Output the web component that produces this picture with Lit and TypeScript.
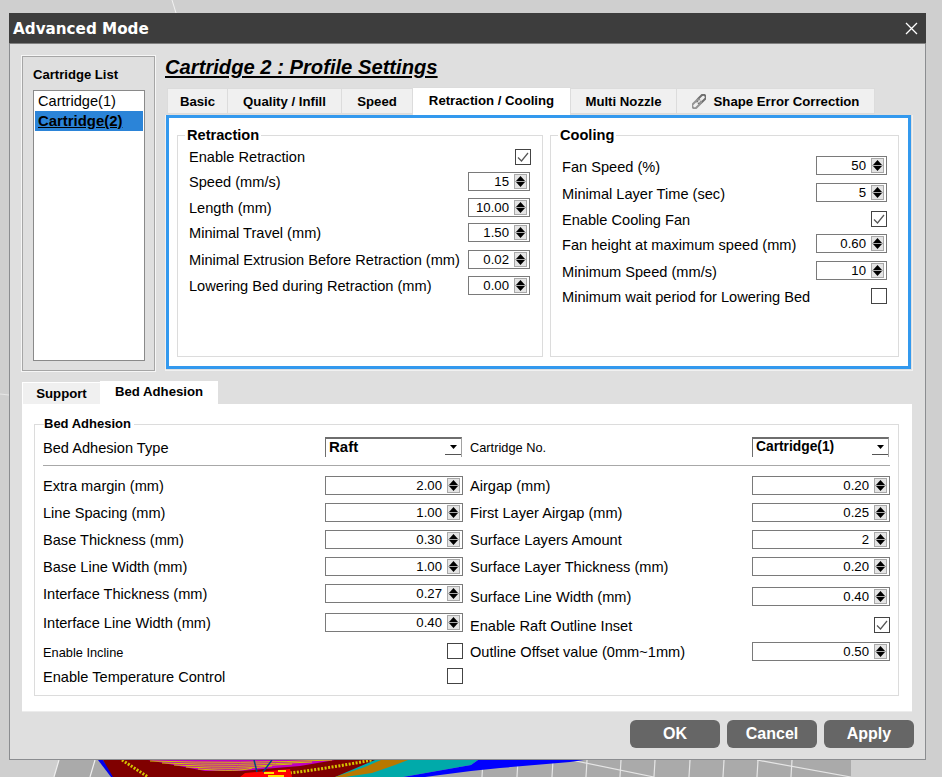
import { LitElement, css, html, svg } from 'lit';
import { customElement } from 'lit/decorators.js';

type Row = { label: string; y: number; value?: string; check?: boolean; small?: boolean };

const retraction: Row[] = [
  { label: 'Enable Retraction', y: 157, check: true },
  { label: 'Speed (mm/s)', y: 182, value: '15' },
  { label: 'Length (mm)', y: 208, value: '10.00' },
  { label: 'Minimal Travel (mm)', y: 233, value: '1.50' },
  { label: 'Minimal Extrusion Before Retraction (mm)', y: 260, value: '0.02' },
  { label: 'Lowering Bed during Retraction (mm)', y: 286, value: '0.00' },
];

const cooling: Row[] = [
  { label: 'Fan Speed (%)', y: 166, value: '50' },
  { label: 'Minimal Layer Time (sec)', y: 193, value: '5' },
  { label: 'Enable Cooling Fan', y: 219, check: true },
  { label: 'Fan height at maximum speed (mm)', y: 244, value: '0.60' },
  { label: 'Minimum Speed (mm/s)', y: 271, value: '10' },
  { label: 'Minimum wait period for Lowering Bed', y: 296, check: false },
];

const bedLeft: Row[] = [
  { label: 'Extra margin (mm)', y: 485, value: '2.00' },
  { label: 'Line Spacing (mm)', y: 512, value: '1.00' },
  { label: 'Base Thickness (mm)', y: 539, value: '0.30' },
  { label: 'Base Line Width (mm)', y: 566, value: '1.00' },
  { label: 'Interface Thickness (mm)', y: 593, value: '0.27' },
  { label: 'Interface Line Width (mm)', y: 622, value: '0.40' },
  { label: 'Enable Incline', y: 651, check: false, small: true },
  { label: 'Enable Temperature Control', y: 676, check: false },
];

const bedRight: Row[] = [
  { label: 'Airgap (mm)', y: 485, value: '0.20' },
  { label: 'First Layer Airgap (mm)', y: 512, value: '0.25' },
  { label: 'Surface Layers Amount', y: 539, value: '2' },
  { label: 'Surface Layer Thickness (mm)', y: 566, value: '0.20' },
  { label: 'Surface Line Width (mm)', y: 596, value: '0.40' },
  { label: 'Enable Raft Outline Inset', y: 625, check: true },
  { label: 'Outline Offset value (0mm~1mm)', y: 651, value: '0.50' },
];

const topTabs = [
  { label: 'Basic', w: 61 },
  { label: 'Quality / Infill', w: 114 },
  { label: 'Speed', w: 71 },
  { label: 'Retraction / Cooling', w: 158, active: true },
  { label: 'Multi Nozzle', w: 106 },
  { label: 'Shape Error Correction', w: 198, clip: true },
];

const gridX = [13, 48, 83, 117, 151, 185, 220, 254, 288, 322];

@customElement('app-root')
export class AppRoot extends LitElement {
  static styles = css`
    :host {
      display: block;
      font-family: 'Liberation Sans', Arial, sans-serif;
      color: #000;
    }
    .desktop {
      position: relative;
      width: 942px;
      height: 777px;
      overflow: hidden;
      background: #cfcfcf;
      padding: 13px 0 0 9px;
      box-sizing: border-box;
    }
    .scene {
      position: absolute;
      left: 0;
      top: 0;
    }
    .dialog {
      position: relative;
      width: 917px;
      height: 747px;
      box-sizing: border-box;
      background: #dfdfdf;
      border: 1px solid #8b8d90;
      border-top: none;
      display: flex;
      flex-direction: column;
    }
    .titlebar {
      height: 30px;
      margin: 0 -1px;
      padding: 0 8px 0 4px;
      background: #3d3d3d;
      border-bottom: 1px solid #808080;
      display: flex;
      align-items: center;
      justify-content: space-between;
      color: #fff;
      font: bold 15.2px 'DejaVu Sans', sans-serif;
      flex: none;
    }
    .titlebar span {
      padding-top: 2px;
    }
    .close {
      display: block;
    }
    .top {
      display: flex;
      margin: 11px 0 0 12px;
      height: 317px;
      flex: none;
    }
    .side {
      width: 133px;
      height: 315px;
      margin-top: 1px;
      box-sizing: border-box;
      border: 1px solid #a6a6a6;
      box-shadow: 0 0 0 1px #f6f6f6;
      padding: 0 9px 9px 10px;
      display: flex;
      flex-direction: column;
      flex: none;
    }
    .side h2 {
      margin: 0;
      height: 33px;
      line-height: 36px;
      font-size: 13.1px;
      font-weight: bold;
    }
    .list {
      flex: 1;
      background: #fff;
      border: 1px solid #8a8a8a;
      padding: 0 1px;
      font-size: 14.6px;
    }
    .list div {
      height: 20px;
      line-height: 20px;
      padding-left: 3px;
    }
    .list .sel {
      background: #2b84d8;
      font-weight: bold;
      text-decoration: underline;
      font-size: 14.9px;
    }
    .right {
      margin-left: 10px;
      display: flex;
      flex-direction: column;
      width: 748px;
      flex: none;
    }
    .heading {
      margin: 0;
      height: 33px;
      line-height: 25px;
      font-size: 20.2px;
      font-weight: bold;
      font-style: italic;
      text-decoration: underline;
      flex: none;
    }
    .tabs {
      display: flex;
      flex: none;
      position: relative;
      z-index: 1;
    }
    .tabs.upper {
      margin-left: 2px;
      height: 27px;
    }
    .tab {
      box-sizing: border-box;
      background: #f0f0f0;
      border: 1px solid #dcdcdc;
      border-left-width: 0;
      font-size: 13.2px;
      font-weight: bold;
      display: flex;
      align-items: center;
      justify-content: center;
      gap: 8px;
      height: 26px;
    }
    .tab:first-child {
      border-left-width: 1px;
    }
    .tab.active {
      background: #fff;
      height: 28px;
      margin-top: -1px;
      padding-bottom: 2px;
      border-bottom: none;
      font-weight: bold;
    }
    .panel {
      box-sizing: border-box;
      width: 748px;
      height: 256px;
      border: 1px solid #f1f1f1;
      border-top: none;
      padding: 0 1px 1px 0;
      flex: none;
    }
    .blue {
      box-sizing: border-box;
      height: 100%;
      width: 745px;
      background: #fff;
      border: 3px solid #3399ee;
      padding: 17px 8px 9px 8px;
      display: flex;
      gap: 7px;
    }
    .group {
      box-sizing: border-box;
      border: 1px solid #dcdcdc;
      height: 100%;
      display: flex;
      flex-direction: column;
    }
    .group.retraction {
      width: 366px;
      padding: 0 12px 0 11px;
    }
    .group.retraction .check {
      margin-right: -1px;
    }
    .group.cooling {
      width: 349px;
      padding: 0 11px 0 11px;
    }
    .group.cooling .row > span,
    .bed .columns .row > span {
      padding-top: 2px;
    }
    .legend {
      align-self: flex-start;
      background: #fff;
      margin: -10px 0 0 -4px;
      padding: 0 2px;
      height: 19px;
      line-height: 18px;
      font-size: 14.6px;
      font-weight: bold;
      flex: none;
    }
    .row {
      height: 20px;
      display: flex;
      align-items: center;
      justify-content: space-between;
      font-size: 14.6px;
      flex: none;
      white-space: nowrap;
    }
    .row.small {
      font-size: 12.8px;
    }
    .spin {
      box-sizing: border-box;
      height: 19px;
      margin-bottom: 1px;
      background: #fff;
      border: 1px solid #7a7a7a;
      display: flex;
      align-items: center;
      justify-content: flex-end;
      font-size: 13.2px;
      padding-right: 2px;
      gap: 5px;
      flex: none;
    }
    .bed .spin {
      margin: 1px 0 0;
    }
    .spin.w62 {
      width: 62px;
    }
    .spin.w71 {
      width: 71px;
    }
    .spin.w138 {
      width: 138px;
    }
    .arrows {
      width: 13px;
      height: 15px;
      box-sizing: border-box;
      border: 1px solid #a9a9a9;
      background: #e4e4e4;
      display: flex;
      flex-direction: column;
      align-items: center;
      justify-content: space-between;
      padding: 1px 0;
    }
    .arrows svg {
      display: block;
    }
    .arrows i {
      display: block;
      width: 100%;
      height: 1px;
      background: #a9a9a9;
    }
    .check {
      box-sizing: border-box;
      width: 16px;
      height: 16px;
      background: #fff;
      border: 1px solid #444;
      flex: none;
    }
    .check svg {
      display: block;
    }
    .lower {
      margin: 9px 0 0 12px;
      width: 890px;
      flex: none;
    }
    .tabs.bottom {
      height: 23px;
    }
    .tabs.bottom .tab {
      height: 22px;
      margin-top: 1px;
      border: none;
      border-top: 1px solid #fff;
      border-left: 1px solid #fff;
      font-size: 13.2px;
    }
    .tabs.bottom .tab.active {
      height: 24px;
      margin-top: 0;
      border: none;
      padding-bottom: 4px;
    }
    .bed {
      box-sizing: border-box;
      height: 308px;
      background: #fff;
      border-bottom: 1px solid #ececec;
      padding: 20px 13px 15px 12px;
    }
    .bed .group {
      padding: 0 8px 0 8px;
    }
    .bed .legend {
      height: 16px;
      line-height: 16px;
      font-size: 13px;
      margin: -9px 0 0 1px;
      padding: 0 3px 0 0;
    }
    .type-row {
      display: grid;
      grid-template-columns: 420px 420px;
      column-gap: 7px;
      margin-top: 6px;
      flex: none;
    }
    .type-row .row.small > span {
      padding-bottom: 2px;
    }
    .combo {
      box-sizing: border-box;
      height: 20px;
      margin-bottom: 2px;
      background: #fff;
      border-top: 2px solid #6e6e6e;
      border-left: 1px solid #6e6e6e;
      border-right: 1px solid #a2a2a2;
      padding: 0 0 2px 3px;
      display: flex;
      justify-content: space-between;
      font-weight: bold;
      flex: none;
      line-height: 15px;
      overflow: hidden;
    }
    .combo.raft {
      width: 137px;
      margin-right: 1px;
      font-size: 15px;
    }
    .combo.cart {
      width: 137px;
      font-size: 13.8px;
      margin-right: 1px;
    }
    .combo-arrow {
      box-sizing: border-box;
      width: 16px;
      height: 16px;
      border-bottom: 1px solid #555;
      display: flex;
      align-items: center;
      justify-content: center;
      flex: none;
    }
    .rule {
      height: 1px;
      background: #a8a8a8;
      margin-top: 7px;
      flex: none;
    }
    .columns {
      display: grid;
      grid-template-columns: 420px 420px;
      column-gap: 7px;
    }
    .col {
      display: flex;
      flex-direction: column;
    }
    .footer {
      display: flex;
      justify-content: flex-end;
      gap: 7px;
      margin-top: 8px;
      padding-right: 11px;
    }
    .btn {
      width: 90px;
      height: 28px;
      border-radius: 6px;
      background: #666;
      color: #fff;
      display: flex;
      align-items: center;
      justify-content: center;
      font-size: 16px;
      font-weight: bold;
    }
  `;

  private spinBox(value: string, width: string) {
    return html`<div class="spin ${width}">
      <span>${value}</span>
      <div class="arrows">
        <svg width="9" height="5" viewBox="0 0 9 5"><path d="M4.5 0 9 5H0z" /></svg>
        <i></i>
        <svg width="9" height="5" viewBox="0 0 9 5"><path d="M0 0h9L4.5 5z" /></svg>
      </div>
    </div>`;
  }

  private checkBox(on: boolean) {
    return html`<div class="check">
      ${on
        ? html`<svg width="14" height="14" viewBox="0 0 14 14">
            <path d="M2 7.5 5.5 11 12 3" fill="none" stroke="#555" stroke-width="1.2" />
          </svg>`
        : ''}
    </div>`;
  }

  // rows carry their centre line, the gap before each comes from the one above
  private rows(list: Row[], start: number, width: string) {
    let prev = start;
    return list.map((r) => {
      const gap = r.y - 10 - prev;
      prev = r.y + 10;
      return html`<div class="row ${r.small ? 'small' : ''}" style="margin-top:${gap}px">
        <span>${r.label}</span>
        ${r.value !== undefined ? this.spinBox(r.value, width) : this.checkBox(!!r.check)}
      </div>`;
    });
  }

  private comboArrow() {
    return html`<div class="combo-arrow">
      <svg width="7" height="4" viewBox="0 0 7 4"><path d="M0 0h7L3.5 4z" /></svg>
    </div>`;
  }

  private clipIcon() {
    return html`<svg width="14" height="15" viewBox="0 0 14 15">
      <g transform="rotate(45 7 7.5)" fill="none">
        <rect x="4.5" y="-1" width="5" height="10" rx="2.5" stroke="#6f6f6f" stroke-width="2" />
        <rect x="4.5" y="6" width="5" height="10" rx="2.5" stroke="#949494" stroke-width="2" />
        <path d="M7 3v8" stroke="#e8e8e8" stroke-width="1" />
      </g>
    </svg>`;
  }

  private scene() {
    return html`<svg class="scene" width="942" height="777" viewBox="0 0 942 777">
      <path d="M172 0l4 13" stroke="#f2f2f2" stroke-width="1" />
      <path d="M0 394l9 1" stroke="#e6e6e6" stroke-width="1" />
      <polygon points="59,760 851,760 851,777 54,777" fill="#aaaaaa" />
      <path d="M59 760l-5 17M95 760l-5 17" stroke="#f0f0f0" stroke-width="1.2" />
      ${gridX.map((x) => svg`<path d="M${x + 470} 760l-1 17" stroke="#e6e6e6" stroke-width="1.2" />`)}
      <path d="M571 760l83 17M757 760l94 17" stroke="#e6e6e6" stroke-width="1.2" />
      <polygon points="98,760 103,760 116,777 111,777" fill="#0000ee" />
      <polygon points="103,760 380,760 345,777 113,777" fill="#800000" />
      <polygon points="148,760 335,760 300,766 240,771 205,771" fill="#c000c0" />
      ${[761, 763, 765, 767, 769].map(
        (y, i) => svg`<path d="M${150 + i * 12} ${y}Q240 ${y + 3} ${332 - i * 20} ${y - 1}" stroke="#d4c400" stroke-width="1" fill="none" />`
      )}
      <path d="M122 760l26 17" stroke="#d4c400" stroke-width="3" stroke-dasharray="2 1.5" fill="none" />
      <path d="M290 773Q330 768 372 760" stroke="#d4c400" stroke-width="3" stroke-dasharray="2 1.5" fill="none" />
      <polygon points="245,773 290,769 292,777 240,777" fill="#ff0000" />
      <path d="M264 773h10M278 771h8M268 776h16" stroke="#ffe000" stroke-width="2" fill="none" />
      <path d="M254 760l3 12M272 760l-9 12" stroke="#004a80" stroke-width="1.5" fill="none" />
      <polygon points="375,760 478,760 471,765 403,777 335,777" fill="#00aaaa" />
      <polygon points="381,760 408,760 395,765 372,773 345,777 335,777 365,767" fill="#b87800" />
      <polygon points="478,760 584,760 570,762 500,768 471,771 440,775 425,777 403,777 471,765" fill="#0000ff" />
    </svg>`;
  }

  render() {
    return html`
      <div class="desktop">
        ${this.scene()}
        <div class="dialog">
          <div class="titlebar">
            <span>Advanced Mode</span>
            <svg class="close" width="13" height="13" viewBox="0 0 13 13">
              <path d="M1 1l11 11M12 1 1 12" stroke="#fff" stroke-width="1.3" />
            </svg>
          </div>
          <div class="top">
            <div class="side">
              <h2>Cartridge List</h2>
              <div class="list">
                <div>Cartridge(1)</div>
                <div class="sel">Cartridge(2)</div>
              </div>
            </div>
            <div class="right">
              <h1 class="heading">Cartridge 2 : Profile Settings</h1>
              <div class="tabs upper">
                ${topTabs.map(
                  (t) => html`<div class="tab ${t.active ? 'active' : ''}" style="width:${t.w}px">
                    ${t.clip ? this.clipIcon() : ''}<span>${t.label}</span>
                  </div>`
                )}
              </div>
              <div class="panel">
                <div class="blue">
                  <div class="group retraction">
                    <div class="legend">Retraction</div>
                    ${this.rows(retraction, 145, 'w62')}
                  </div>
                  <div class="group cooling">
                    <div class="legend">Cooling</div>
                    ${this.rows(cooling, 145, 'w71')}
                  </div>
                </div>
              </div>
            </div>
          </div>
          <div class="lower">
            <div class="tabs bottom">
              <div class="tab" style="width:78px">Support</div>
              <div class="tab active" style="width:118px">Bed Adhesion</div>
            </div>
            <div class="bed">
              <div class="group">
                <div class="legend">Bed Adhesion</div>
                <div class="type-row">
                  <div class="row">
                    <span>Bed Adhesion Type</span>
                    <div class="combo raft">
                      <span>Raft</span>
                      ${this.comboArrow()}
                    </div>
                  </div>
                  <div class="row small">
                    <span>Cartridge No.</span>
                    <div class="combo cart">
                      <span>Cartridge(1)</span>
                      ${this.comboArrow()}
                    </div>
                  </div>
                </div>
                <div class="rule"></div>
                <div class="columns">
                  <div class="col">${this.rows(bedLeft, 466, 'w138')}</div>
                  <div class="col">${this.rows(bedRight, 466, 'w138')}</div>
                </div>
              </div>
            </div>
          </div>
          <div class="footer">
            <div class="btn">OK</div>
            <div class="btn">Cancel</div>
            <div class="btn">Apply</div>
          </div>
        </div>
      </div>
    `;
  }
}
